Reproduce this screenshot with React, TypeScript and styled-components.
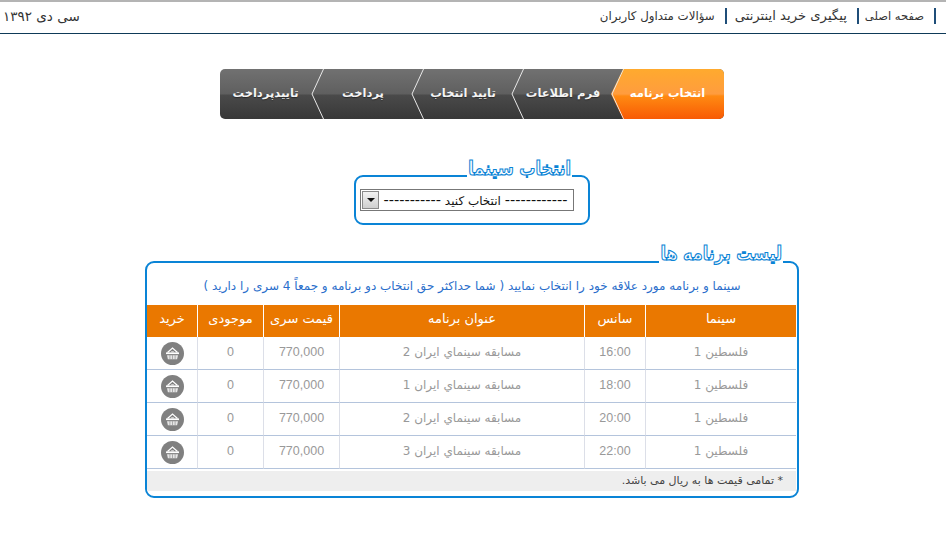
import React from "react";
import styled, { createGlobalStyle } from "styled-components";

const Global = createGlobalStyle`
  html, body { margin: 0; padding: 0; background: #fff; }
  body { font-family: "DejaVu Sans", sans-serif; direction: rtl; }
`;

const Page = styled.div`
  width: 946px;
  height: 534px;
  box-sizing: border-box;
  overflow: hidden;
  display: flex;
  flex-direction: column;
`;

const TopBar = styled.header`
  width: 100%;
  box-sizing: border-box;
  height: 34px;
  border-top: 2px solid #b4b4b4;
  border-bottom: 1px solid #0e3a58;
  display: flex;
  justify-content: space-between;
  align-items: center;
  padding: 0 10px 3px 3px;
`;

const Nav = styled.nav`
  display: flex;
  align-items: center;
`;

const NavLink = styled.a<{ $size: number }>`
  font-size: ${(p) => p.$size}px;
  color: #333;
  padding: 0 10px 0 9px;
  line-height: 16px;
  white-space: nowrap;
  border-right: 2px solid #1f4e79;
  &:first-child { padding-left: 6px; }
  &:nth-child(2) { padding-left: 8px; }
`;

const DateText = styled.span`
  font-size: 13.5px;
  color: #333;
`;

const Content = styled.main`
  width: 944px;
  align-self: flex-end;
  display: flex;
  flex-direction: column;
  align-items: center;
`;

const Stepper = styled.ol`
  list-style: none;
  margin: 35px 0 0;
  padding: 0;
  width: 504px;
  height: 50px;
  display: flex;
  border-radius: 5px;
  overflow: hidden;
  background: linear-gradient(#717171 0%, #5f5f5f 50%, #4a4a4a 52%, #383838 100%);
`;

const Step = styled.li<{ $active?: boolean; $w: number }>`
  position: relative;
  width: ${(p) => p.$w}px;
  display: flex;
  align-items: center;
  justify-content: center;
  font-size: 11.5px;
  font-weight: bold;
  color: #f4f4f4;
  padding: 0 0 3px 4px;
  box-sizing: border-box;
  white-space: nowrap;
  text-shadow: 0 1px 1px rgba(0, 0, 0, 0.4);
  &:last-child { padding-left: 0; }
  ${(p) =>
    p.$active &&
    `
    padding-left: 0;
    background: linear-gradient(#ffaa2e 0%, #ff9c3e 50%, #ff8a12 54%, #f85a04 100%);
    clip-path: polygon(12px 0, 100% 0, 100% 100%, 12px 100%, 0 50%);
    color: #fff;
    text-shadow: none;
  `}
`;

const Chevron = styled.svg`
  position: absolute;
  top: 0;
  left: 0;
  width: 14px;
  height: 50px;
`;

const Panel = styled.section<{ $w: number; $h: number; $mt: number }>`
  position: relative;
  box-sizing: border-box;
  width: ${(p) => p.$w}px;
  height: ${(p) => p.$h}px;
  margin-top: ${(p) => p.$mt}px;
  border: 2px solid #0a84d6;
  border-radius: 9px;
  display: flex;
  flex-direction: column;
`;

const Legend = styled.h2<{ $right: number; $top: number }>`
  position: absolute;
  right: ${(p) => p.$right}px;
  top: ${(p) => p.$top}px;
  margin: 0;
  padding: 0 1px;
  font-size: 16px;
  line-height: 22px;
  height: 22px;
  font-weight: bold;
  white-space: nowrap;
  color: #fff;
  background: #fff;
  transform: scaleY(1.2);
  -webkit-text-stroke: 1px #0a84d6;
`;

const SelectBox = styled.div`
  margin: 12px 14px 0 4px;
  box-sizing: border-box;
  height: 22px;
  border: 1px solid #777;
  display: flex;
  align-items: center;
  padding: 0 1px;
  font-size: 12px;
  color: #111;
`;

const SelectText = styled.span`
  flex: 1;
  text-align: center;
  white-space: nowrap;
`;

const Dashes = styled.span`
  font-size: 14.5px;
`;

const SelectArrow = styled.span`
  width: 17px;
  height: 18px;
  box-sizing: border-box;
  border: 1px solid #8a8a8a;
  background: linear-gradient(#f2f2f2, #cfcfcf);
  display: flex;
  align-items: center;
  justify-content: center;
  &::before {
    content: "";
    border-left: 4px solid transparent;
    border-right: 4px solid transparent;
    border-top: 4px solid #111;
  }
`;

const Intro = styled.p`
  margin: 0;
  height: 42px;
  line-height: 46px;
  text-align: center;
  font-size: 12px;
  color: #2a6ecb;
  white-space: nowrap;
`;

const Table = styled.table`
  width: 649px;
  margin-right: 1px;
  border-collapse: separate;
  border-spacing: 0;
  table-layout: fixed;
`;

const Th = styled.th<{ $w: number }>`
  width: ${(p) => p.$w}px;
  height: 32px;
  padding: 0 0 5px;
  box-sizing: border-box;
  background: #ea7800;
  color: #fff;
  font-size: 13px;
  font-weight: normal;
  border-left: 1px solid #fff;
  &:last-child { border-left: none; }
`;

const Td = styled.td`
  height: 33px;
  box-sizing: border-box;
  padding: 0 0 2px;
  text-align: center;
  color: #999;
  font-size: 12px;
  border-left: 1px solid #dcdfe8;
  border-bottom: 1px solid #b4c4dc;
  &:last-child { border-left: none; }
`;

const Num = styled.span`
  font-family: "Liberation Sans", sans-serif;
  font-size: 12.5px;
`;

const Buy = styled.svg`
  display: block;
  margin: 2px auto 0;
  width: 23px;
  height: 23px;
`;

const Footer = styled.div`
  margin: 2px 1px 0 0;
  height: 20px;
  background: #eeeeee;
  padding: 0 13px;
  font-size: 11px;
  line-height: 19px;
  color: #444;
`;

const steps: [string, number][] = [
  ["انتخاب برنامه", 113],
  ["فرم اطلاعات", 100],
  ["تایید انتخاب", 100],
  ["پرداخت", 100],
  ["تاییدپرداخت", 91],
];

const rows = [
  ["16:00", "2"],
  ["18:00", "1"],
  ["20:00", "2"],
  ["22:00", "3"],
];

const BuyIcon = () => (
  <Buy viewBox="0 0 23 23">
    <circle cx="11.5" cy="11.5" r="11.5" fill="#808080" />
    <path d="M6.5 10.5 L11.5 6 L16.5 10.5" fill="none" stroke="#fff" strokeWidth="1.2" />
    <path d="M10.2 9.2h2.6v1.2h-2.6z" fill="#ddd" />
    <path d="M5 10.4h13v1.7H5z" fill="#fff" />
    <path d="M6 13.2h11l-.9 4H6.9z" fill="#e6e6e6" />
    <path d="M8.9 13.2v4M11.5 13.2v4M14.1 13.2v4" stroke="#909090" strokeWidth="0.7" />
  </Buy>
);

const ChevronMark = () => (
  <Chevron viewBox="0 0 14 50">
    <path d="M12.5 0 L1 25 L12.5 50" fill="none" stroke="#e8e8e8" strokeWidth="1" />
  </Chevron>
);

export default function App() {
  return (
    <Page>
      <Global />
      <TopBar>
        <Nav>
          <NavLink $size={11.5}>صفحه اصلی</NavLink>
          <NavLink $size={13.2}>پیگیری خرید اینترنتی</NavLink>
          <NavLink $size={11.8}>سؤالات متداول کاربران</NavLink>
        </Nav>
        <DateText>سی دی ۱۳۹۲</DateText>
      </TopBar>

      <Content>
        <Stepper>
          {steps.map(([label, w], i) => (
            <Step key={label} $w={w} $active={i === 0}>
              {label}
              {i < 4 && <ChevronMark />}
            </Step>
          ))}
        </Stepper>

        <Panel $w={236} $h={50} $mt={56}>
          <Legend $right={16} $top={-19}>انتخاب سینما</Legend>
          <SelectBox>
            <SelectText>
              <Dashes>------------</Dashes> انتخاب کنید <Dashes>-----------</Dashes>
            </SelectText>
            <SelectArrow />
          </SelectBox>
        </Panel>

        <Panel $w={654} $h={237} $mt={36}>
          <Legend $right={14} $top={-20}>لیست برنامه ها</Legend>
          <Intro>سینما و برنامه مورد علاقه خود را انتخاب نمایید ( شما حداکثر حق انتخاب دو برنامه و جمعاً 4 سری را دارید )</Intro>
          <Table>
            <thead>
              <tr>
                <Th $w={151}>سینما</Th>
                <Th $w={61}>سانس</Th>
                <Th $w={245}>عنوان برنامه</Th>
                <Th $w={76}>قیمت سری</Th>
                <Th $w={66}>موجودی</Th>
                <Th $w={50}>خرید</Th>
              </tr>
            </thead>
            <tbody>
              {rows.map(([time, n]) => (
                <tr key={time}>
                  <Td>فلسطین 1</Td>
                  <Td><Num>{time}</Num></Td>
                  <Td>مسابقه سینماي ایران {n}</Td>
                  <Td><Num>770,000</Num></Td>
                  <Td><Num>0</Num></Td>
                  <Td><BuyIcon /></Td>
                </tr>
              ))}
            </tbody>
          </Table>
          <Footer>* تمامی قیمت ها به ریال می باشد.</Footer>
        </Panel>
      </Content>
    </Page>
  );
}
